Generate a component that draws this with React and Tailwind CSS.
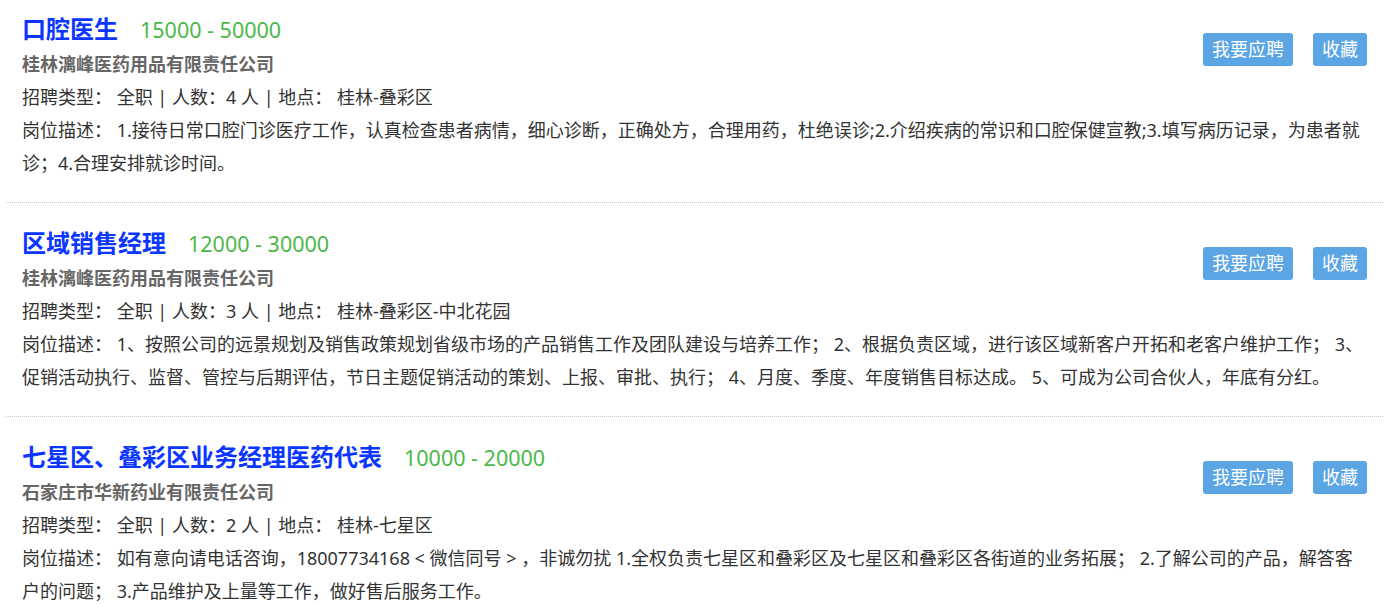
import React from 'react'

const jobs = [
  {
    title: '口腔医生',
    salary: '15000 - 50000',
    company: '桂林漓峰医药用品有限责任公司',
    count: 4,
    place: '桂林-叠彩区',
    desc: '1.接待日常口腔门诊医疗工作，认真检查患者病情，细心诊断，正确处方，合理用药，杜绝误诊;2.介绍疾病的常识和口腔保健宣教;3.填写病历记录，为患者就诊；4.合理安排就诊时间。',
  },
  {
    title: '区域销售经理',
    salary: '12000 - 30000',
    company: '桂林漓峰医药用品有限责任公司',
    count: 3,
    place: '桂林-叠彩区-中北花园',
    desc: '1、按照公司的远景规划及销售政策规划省级市场的产品销售工作及团队建设与培养工作； 2、根据负责区域，进行该区域新客户开拓和老客户维护工作； 3、促销活动执行、监督、管控与后期评估，节日主题促销活动的策划、上报、审批、执行； 4、月度、季度、年度销售目标达成。 5、可成为公司合伙人，年底有分红。',
  },
  {
    title: '七星区、叠彩区业务经理医药代表',
    salary: '10000 - 20000',
    company: '石家庄市华新药业有限责任公司',
    count: 2,
    place: '桂林-七星区',
    desc: '如有意向请电话咨询，18007734168 < 微信同号 > ，非诚勿扰 1.全权负责七星区和叠彩区及七星区和叠彩区各街道的业务拓展； 2.了解公司的产品，解答客户的问题； 3.产品维护及上量等工作，做好售后服务工作。',
  },
]

function JobItem({ job }) {
  return (
    <div className="mx-[6px] border-b border-dotted border-[#c8c8c8] px-4 pt-[22px] pb-[22px] first:pt-[11px]">
      <div className="flex items-start justify-between">
        <div>
          <div className="flex items-baseline leading-[36px]">
            <span className="text-[24px] font-bold text-[#0a36ff]">{job.title}</span>
            <span className="ml-[22px] text-[21.5px] text-[#4cb849]">{job.salary}</span>
          </div>
          <div className="text-[18px] font-bold leading-[33px] text-[#666]">{job.company}</div>
        </div>
        <div className="mt-[22px] flex gap-5">
          <button className="h-[33px] rounded-[3px] bg-[#5ca5e4] px-[9px] text-[18px] text-white">我要应聘</button>
          <button className="h-[33px] rounded-[3px] bg-[#5ca5e4] px-[9px] text-[18px] text-white">收藏</button>
        </div>
      </div>
      <p className="text-[18px] leading-[33px] text-[#333]">
        招聘类型： 全职 | 人数：{job.count} 人 | 地点： {job.place}
      </p>
      <p className="text-[18px] leading-[33px] text-[#333]">岗位描述： {job.desc}</p>
    </div>
  )
}

export default function App() {
  return (
    <div className="h-[604px] overflow-hidden bg-white font-['Noto_Sans','Noto_Sans_CJK_SC',sans-serif]">
      {jobs.map((job) => (
        <JobItem key={job.title} job={job} />
      ))}
    </div>
  )
}
